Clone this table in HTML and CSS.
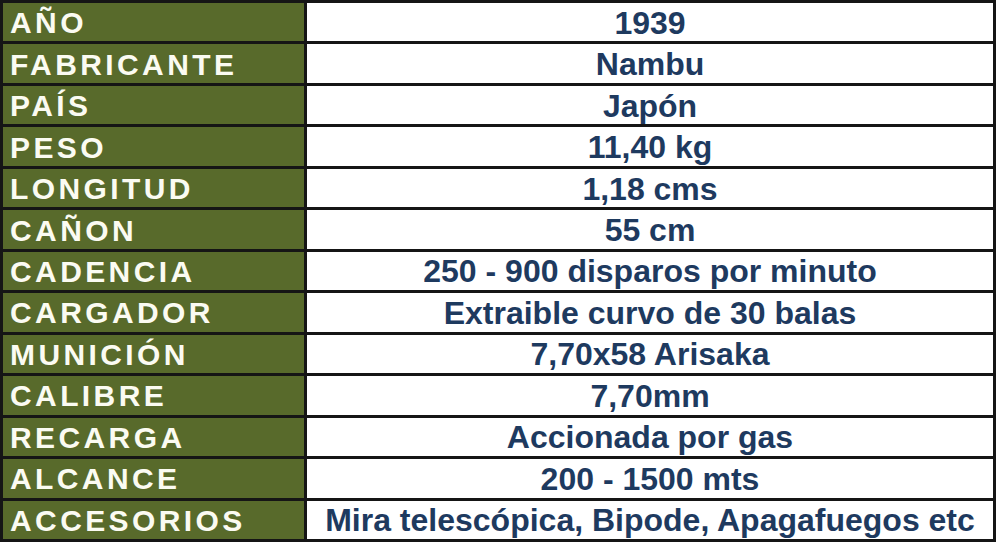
FILE: index.html
```html
<!DOCTYPE html>
<html lang="es">
<head>
<meta charset="utf-8">
<title>Ficha técnica</title>
<link rel="stylesheet" href="styles.css">
</head>
<body>
<div class="spec">
  <div class="label">AÑO</div><div class="value">1939</div>
  <div class="label">FABRICANTE</div><div class="value">Nambu</div>
  <div class="label">PAÍS</div><div class="value">Japón</div>
  <div class="label">PESO</div><div class="value">11,40 kg</div>
  <div class="label">LONGITUD</div><div class="value">1,18 cms</div>
  <div class="label">CAÑON</div><div class="value">55 cm</div>
  <div class="label">CADENCIA</div><div class="value">250 - 900 disparos por minuto</div>
  <div class="label">CARGADOR</div><div class="value">Extraible curvo de 30 balas</div>
  <div class="label">MUNICIÓN</div><div class="value">7,70x58 Arisaka</div>
  <div class="label">CALIBRE</div><div class="value">7,70mm</div>
  <div class="label">RECARGA</div><div class="value">Accionada por gas</div>
  <div class="label">ALCANCE</div><div class="value">200 - 1500 mts</div>
  <div class="label">ACCESORIOS</div><div class="value">Mira telescópica, Bipode, Apagafuegos etc</div>
</div>
</body>
</html>
```
FILE: styles.css
```css
html, body {
  margin: 0;
  padding: 0;
  background: #ffffff;
}
.spec {
  width: 996px;
  height: 542px;
  box-sizing: border-box;
  display: grid;
  grid-template-columns: 301px 1fr;
  grid-auto-rows: 1fr;
  gap: 3px;
  padding: 3px;
  background: #151515;
  font-family: "Liberation Sans", Arial, sans-serif;
  font-weight: bold;
}
.label {
  background: #586a2b;
  color: #fbfbf2;
  font-size: 30px;
  letter-spacing: 3.4px;
  display: flex;
  align-items: center;
  padding-left: 7px;
  padding-top: 2px;
  line-height: 1;
}
.value {
  background: #ffffff;
  color: #1e3a5f;
  font-size: 32px;
  display: flex;
  align-items: center;
  justify-content: center;
  padding-top: 1px;
  line-height: 1;
}
```
